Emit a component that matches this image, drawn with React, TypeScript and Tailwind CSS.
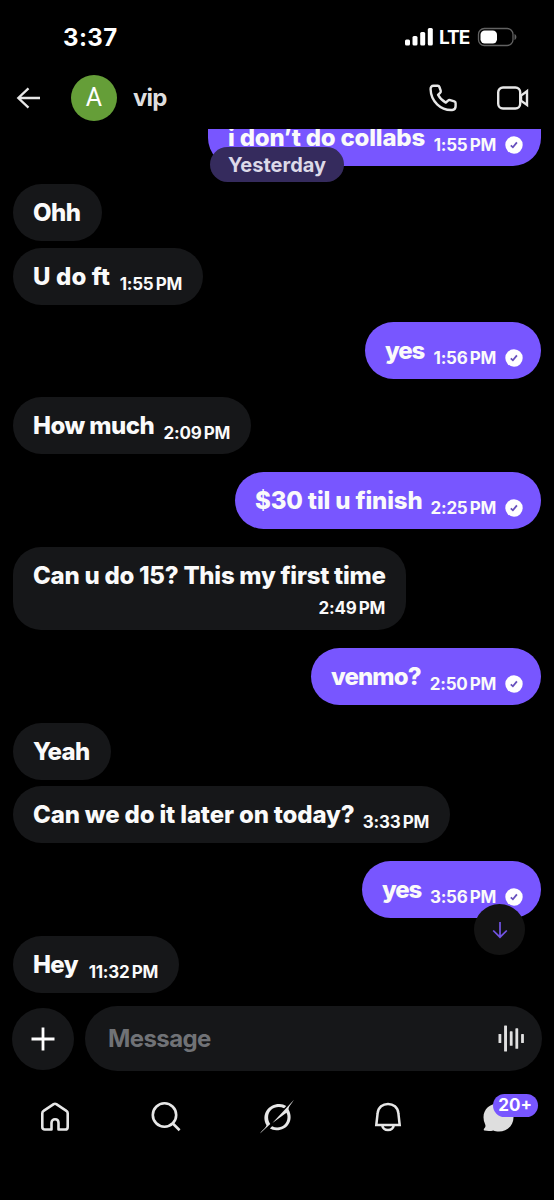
type Message = {
  text: string;
  time?: string;
  sent?: boolean;
  gap: string;
  width: string;
  tracking: string;
};

const messages: Message[] = [
  { text: "Ohh", gap: "mt-[18px]", width: "w-[89px]", tracking: "tracking-[-0.5px]" },
  { text: "U do ft", time: "1:55 PM", gap: "mt-[7px]", width: "w-[190px]", tracking: "tracking-[0.15px]" },
  { text: "yes", time: "1:56 PM", sent: true, gap: "mt-[17px]", width: "w-[176px]", tracking: "tracking-[-1.2px]" },
  { text: "How much", time: "2:09 PM", gap: "mt-[18px]", width: "w-[238px]", tracking: "tracking-[-0.55px]" },
  { text: "$30 til u finish", time: "2:25 PM", sent: true, gap: "mt-[18px]", width: "w-[306px]", tracking: "tracking-[-0.15px]" },
];

const later: Message[] = [
  { text: "venmo?", time: "2:50 PM", sent: true, gap: "mt-[18px]", width: "w-[230px]", tracking: "tracking-[-0.9px]" },
  { text: "Yeah", gap: "mt-[18px]", width: "w-[98px]", tracking: "tracking-[-0.6px]" },
  { text: "Can we do it later on today?", time: "3:33 PM", gap: "mt-[6px]", width: "w-[437px]", tracking: "tracking-[-0.15px]" },
  { text: "yes", time: "3:56 PM", sent: true, gap: "mt-[18px]", width: "w-[179px]", tracking: "tracking-[-1.2px]" },
  { text: "Hey", time: "11:32 PM", gap: "mt-[18px]", width: "w-[166px]", tracking: "tracking-[-0.6px]" },
];

function Sent() {
  return (
    <svg className="mt-[14px] size-[18px] shrink-0" viewBox="0 0 18 18">
      <circle cx="9" cy="9" r="8.7" fill="#fff" />
      <path d="M5.8 9.3l2.1 2 4-4.9" fill="none" stroke="#6750bd" strokeWidth="1.8" />
    </svg>
  );
}

function Bubble({ m }: { m: Message }) {
  return (
    <div className={`flex ${m.gap} ${m.sent ? "justify-end" : ""}`}>
      <div
        className={`flex h-[57px] shrink-0 items-center justify-between whitespace-nowrap rounded-full pl-5 ${m.width} ${
          m.sent ? "bg-[#7856ff] pr-[18px]" : "bg-[#161719] pr-[21px]"
        }`}
      >
        <span className={`text-2xl font-extrabold ${m.tracking}`}>{m.text}</span>
        {m.time && (
          <span className="flex items-center gap-[9px]">
            <span className="pt-[14px] text-[17px] leading-5 font-bold tracking-[-0.25px] [word-spacing:-1.6px]">{m.time}</span>
            {m.sent && <Sent />}
          </span>
        )}
      </div>
    </div>
  );
}

export default function App() {
  return (
    <div className="flex h-[1200px] w-[554px] flex-col overflow-hidden bg-black font-['Inter',sans-serif] text-[#fafafa]">
      <div className="flex h-[74px] shrink-0 items-center justify-between pr-[37px] pl-[63px]">
        <span className="pt-px text-[24px] font-bold tracking-[0.4px] text-white">3:37</span>
        <div className="flex items-center">
          <svg className="h-[18px] w-7" viewBox="0 0 28 18" fill="#fff">
            <rect x="0" y="11.5" width="5" height="6" rx="1.5" />
            <rect x="7.5" y="8" width="5" height="9.5" rx="1.5" />
            <rect x="15.2" y="4" width="5" height="13.5" rx="1.5" />
            <rect x="22.8" y="0" width="5" height="17.5" rx="1.5" />
          </svg>
          <span className="ml-[6px] w-[38px] pt-[2px] text-[19px] font-bold tracking-[-1px] text-white">LTE</span>
          <svg className="h-5 w-10" viewBox="0 0 40 20">
            <rect x="1.5" y="1.5" width="34.5" height="17" rx="5.8" fill="none" stroke="#626262" strokeWidth="1.3" />
            <rect x="3.5" y="3.5" width="16.5" height="13" rx="4.2" fill="#fff" />
            <path d="M37.5 7v6c1.2-.5 1.9-1.7 1.9-3s-.7-2.5-1.9-3z" fill="#626262" />
          </svg>
        </div>
      </div>

      <div className="flex h-[55px] shrink-0 items-center pr-6 pb-[7px] pl-4">
        <svg className="h-6 w-[25px]" viewBox="0 0 25 24" fill="none" stroke="#e7e7e7" strokeWidth="2.3">
          <path d="M24 12H2.5M12.5 2.3L2.3 12l10.2 9.7" />
        </svg>
        <div className="ml-[30px] flex size-[46px] items-center justify-center rounded-full bg-[#659e38] font-['Roboto',sans-serif] text-[25px] text-white">
          A
        </div>
        <span className="ml-[16px] text-2xl font-bold tracking-[-0.8px] text-[#dedede]">vip</span>
        <svg className="mr-[40px] ml-auto size-[28px]" viewBox="0 0 28 28" fill="none" stroke="#e7e7e7" strokeWidth="2.4" strokeLinejoin="round">
          <path d="M4.6 1.8h4.2q1.2 0 1.6 1.2l1.3 3.7q.4 1.3-.6 2.2L9 10.8q2.6 5 7.8 7.8l2.2-2q.9-.9 2.2-.5l4.1 1.3q1.3.4 1.3 1.7v3.2q0 3.6-3.4 3.7C11.6 26.6 1.9 17.1 1.6 5.2Q1.4 1.9 4.6 1.8z" />
        </svg>
        <svg className="h-6 w-[33px]" viewBox="0 0 33 24" fill="none" stroke="#e7e7e7" strokeWidth="2.4">
          <rect x="1.2" y="1.5" width="22" height="21" rx="4.8" />
          <path d="M24 9.6l6-4.4v13.8l-6-4.4z" />
        </svg>
      </div>

      <main className="flex h-[871px] shrink-0 flex-col px-[13px]">
        <div className="relative flex h-[37px] shrink-0 justify-end">
          <div className="flex h-[37px] w-[333px] items-end justify-between overflow-hidden rounded-b-[28px] bg-[#7856ff] pr-[18px] pl-5 whitespace-nowrap">
            <span className="text-2xl leading-[57px] font-extrabold tracking-[-0.2px]">i don’t do collabs</span>
            <span className="flex h-[57px] items-center gap-[9px]">
              <span className="pt-[14px] text-[17px] leading-5 font-bold tracking-[-0.25px] [word-spacing:-1.6px]">1:55 PM</span>
              <Sent />
            </span>
          </div>
          <div className="absolute top-[18px] left-[197px] flex h-[35px] w-[134px] items-center justify-center rounded-full bg-[#352b5d] text-xl font-bold text-[#dcd9e8]">
            Yesterday
          </div>
        </div>
        {messages.map((m) => (
          <Bubble key={m.text} m={m} />
        ))}
        <div className="mt-[18px] flex h-[83px] w-[393px] shrink-0 flex-col rounded-[28px] bg-[#161719] pr-[21px] pl-5 pt-[14px] whitespace-nowrap">
          <span className="text-2xl leading-[30px] font-extrabold tracking-[-0.26px]">Can u do 15? This my first time</span>
          <span className="mt-[7px] self-end text-[17px] leading-5 font-bold tracking-[-0.25px] [word-spacing:-1.6px]">2:49 PM</span>
        </div>
        {later.map((m) => (
          <Bubble key={m.text} m={m} />
        ))}
      </main>

      <div className="relative flex h-[77px] shrink-0 items-start pr-3 pl-3 pt-[6px]">
        <button className="absolute -top-[96px] left-[474px] flex size-[51px] items-center justify-center rounded-full bg-[#131313]">
          <svg className="size-[18px]" viewBox="0 0 18 18" fill="none" stroke="#7354e5" strokeWidth="1.7">
            <path d="M9 1v15M2.2 9.5L9 16.2l6.8-6.7" />
          </svg>
        </button>
        <div className="mt-[2px] flex size-[62px] items-center justify-center rounded-full bg-[#161719]">
          <svg className="size-6" viewBox="0 0 24 24" stroke="#fff" strokeWidth="2.8">
            <path d="M12 .5v23M.5 12h23" />
          </svg>
        </div>
        <div className="ml-[11px] flex h-[65px] flex-1 items-center justify-between rounded-full bg-[#161719] pr-[17px] pl-[23px]">
          <span className="text-2xl font-bold tracking-[-0.6px] text-[#707276]">Message</span>
          <svg className="h-[27px] w-[27px]" viewBox="0 0 27 27" fill="#e0e0e0">
            <rect x="0.5" y="9" width="2.8" height="9" rx=".6" />
            <rect x="6.1" y="0.5" width="2.9" height="26" rx=".6" />
            <rect x="11.8" y="6.3" width="2.8" height="14.5" rx=".6" />
            <rect x="17.4" y="3.3" width="2.8" height="20.5" rx=".6" />
            <rect x="23.1" y="9" width="2.8" height="9" rx=".6" />
          </svg>
        </div>
      </div>

      <nav className="grid grid-cols-5 pt-[22px] *:justify-self-center">
        <svg className="h-9 w-9" viewBox="0 0 36 36" fill="none" stroke="#e7e7e7" strokeWidth="2.6" strokeLinejoin="round">
          <path d="M5.3 14.2q0-1.5 1.3-2.3L16.7 5.2q1.3-.8 2.6 0l10.1 6.7q1.3.8 1.3 2.3v13.7q0 2.6-2.6 2.6h-6.6v-6.8c0-4.6-7-4.6-7 0v6.8H7.9q-2.6 0-2.6-2.6z" />
        </svg>
        <svg className="h-9 w-9" viewBox="0 0 36 36" fill="none" stroke="#e7e7e7" strokeWidth="2.6">
          <circle cx="16.5" cy="16" r="11.7" />
          <path d="M24.6 24.3l7 6.9" />
        </svg>
        <svg className="h-9 w-9" viewBox="0 0 36 36" fill="#e7e7e7">
          <path d="M1 34.5C3.2 31 7.2 28.6 7.5 26.3 1.4 15.1 10 4.8 20.5 5q3.8.1 6.8 2l-2.2 2.2C17.7 5.6 9.2 9.8 9.1 18.2c0 3.1 1.1 5.1 2.2 6.7z" />
          <path d="M35 .8c-2.2 3.6-5.6 6.9-5.4 9.6C35.4 21.6 28 31.4 17.3 31.2q-3.7 0-6.4-1.6l2.2-2.3C20.1 30.7 28.4 26.6 28.5 18.2q0-2.5-1-4.4L13.4 24.1z" />
        </svg>
        <svg className="h-9 w-9" viewBox="0 0 36 36" fill="none" stroke="#e7e7e7" strokeWidth="2.5">
          <path d="M6.3 26l1.3-11.5C8.5 1.7 27.5 1.7 28.4 14.5L29.7 26zM12.2 26.5c1.3 6 10.3 6 11.6 0" />
        </svg>
        <div className="relative h-9 w-9">
          <svg className="h-9 w-9" viewBox="0 0 36 36" fill="#dedede">
            <path d="M17.5 4.5c8.5 0 15 6 15 14S26 32.5 18 32.5c-2.3 0-4.2-.3-5.6-1.1-2.8.7-5.8.7-9 .1-.9-.2-.8-1.3-.2-1.9 1.5-1.5 1.6-2.7.8-4.5-1-2.2-1.5-4.5-1.5-6.9 0-8 6.5-13.7 15-13.7z" />
          </svg>
          <span className="absolute -top-[5px] left-[12px] flex h-[23px] w-[45px] items-center justify-center rounded-full bg-[#7856ff] text-[17px] font-bold text-white">
            20+
          </span>
        </div>
      </nav>
    </div>
  );
}
